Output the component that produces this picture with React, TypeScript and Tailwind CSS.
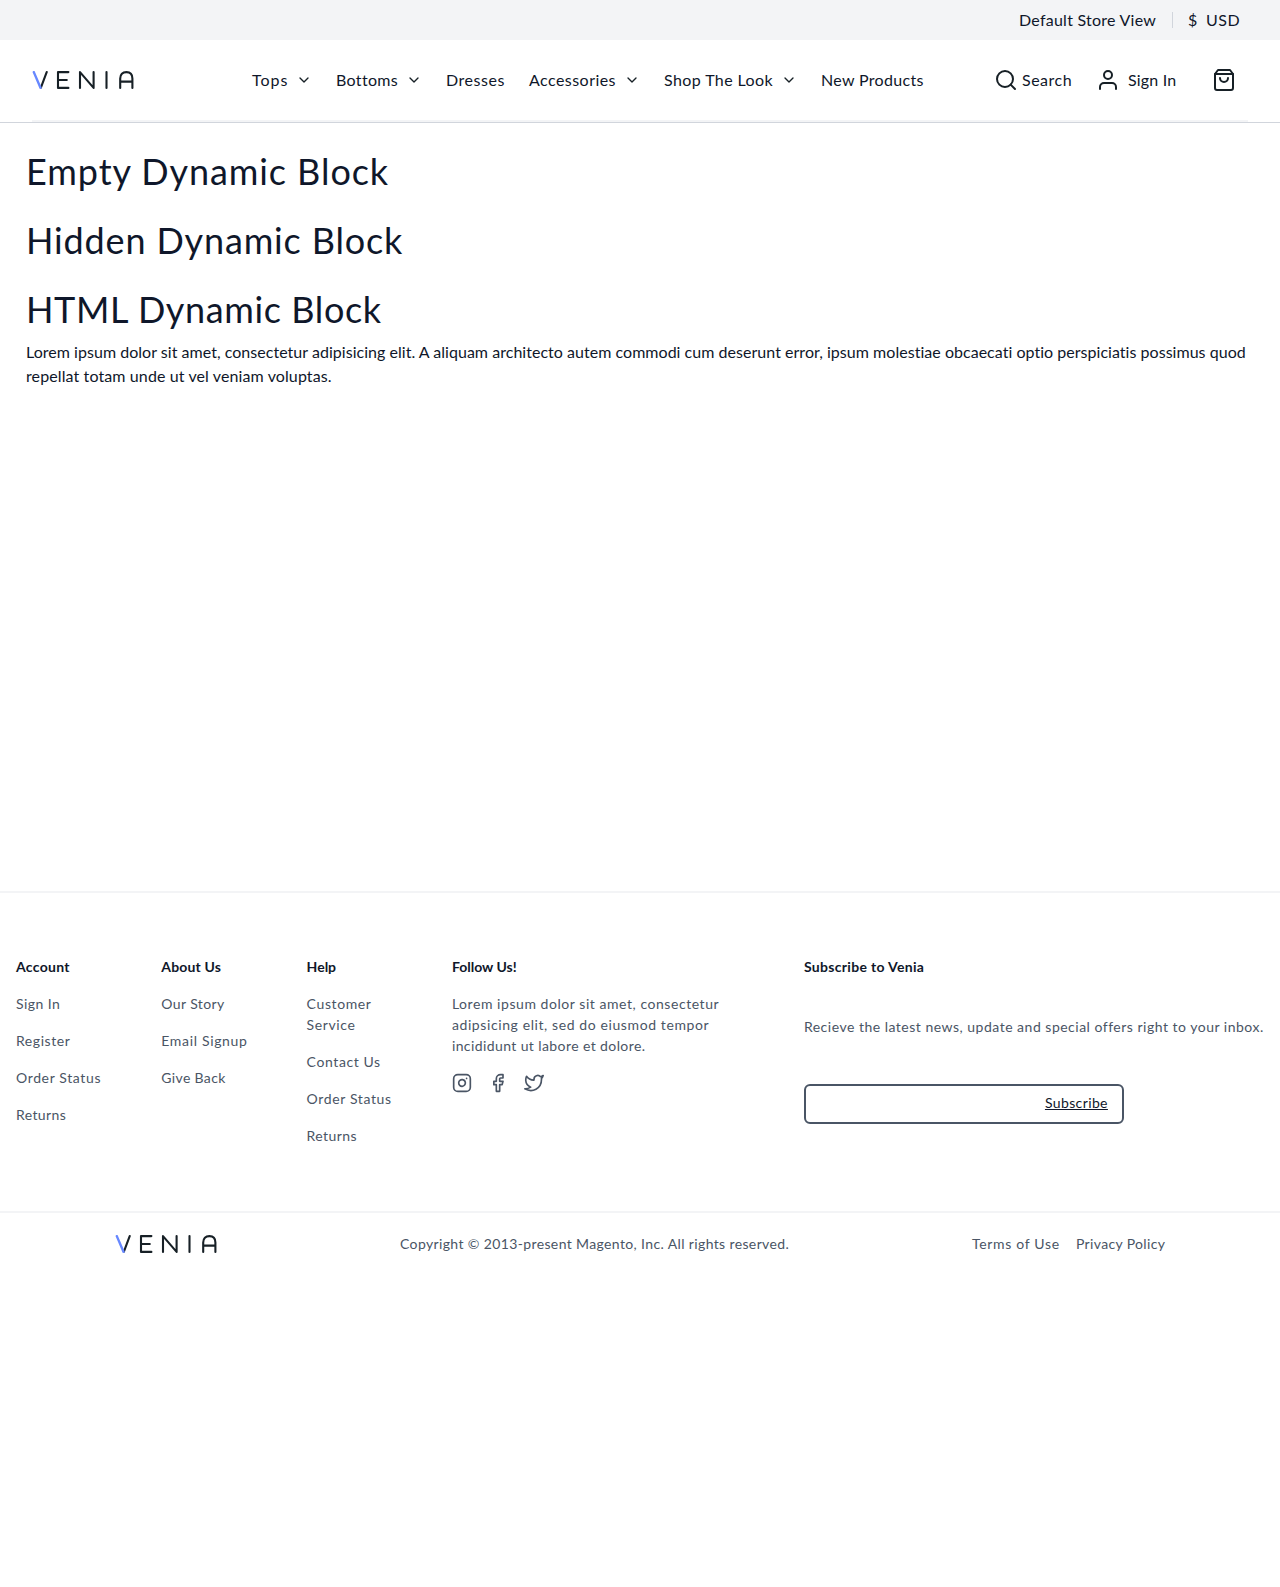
import React from "react";

type Item = { text: string; tracking: string };
type NavItem = Item & { width: string; menu?: boolean };

const nav: NavItem[] = [
  { text: "Tops", width: "w-[36px]", tracking: "tracking-[1px]", menu: true },
  { text: "Bottoms", width: "w-[62px]", tracking: "tracking-[0.33px]", menu: true },
  { text: "Dresses", width: "w-[59px]", tracking: "tracking-[0.55px]" },
  { text: "Accessories", width: "w-[87px]", tracking: "tracking-[0.45px]", menu: true },
  { text: "Shop The Look", width: "w-[109px]", tracking: "tracking-[0.4px]", menu: true },
  { text: "New Products", width: "w-[103px]", tracking: "tracking-[0.32px]" },
];

const headings: Item[] = [
  { text: "Empty Dynamic Block", tracking: "tracking-[0.93px]" },
  { text: "Hidden Dynamic Block", tracking: "tracking-[0.85px]" },
  { text: "HTML Dynamic Block", tracking: "tracking-[0.62px]" },
];

const columns: { title: Item; links: Item[] }[] = [
  {
    title: { text: "Account", tracking: "tracking-[0.3px]" },
    links: [
      { text: "Sign In", tracking: "tracking-[0.45px]" },
      { text: "Register", tracking: "tracking-[0.55px]" },
      { text: "Order Status", tracking: "tracking-[0.63px]" },
      { text: "Returns", tracking: "tracking-[0.38px]" },
    ],
  },
  {
    title: { text: "About Us", tracking: "tracking-[0.15px]" },
    links: [
      { text: "Our Story", tracking: "tracking-[0.4px]" },
      { text: "Email Signup", tracking: "tracking-[0.67px]" },
      { text: "Give Back", tracking: "tracking-[0.35px]" },
    ],
  },
  {
    title: { text: "Help", tracking: "tracking-normal" },
    links: [
      { text: "Customer Service", tracking: "tracking-[0.62px]" },
      { text: "Contact Us", tracking: "tracking-[0.6px]" },
      { text: "Order Status", tracking: "tracking-[0.63px]" },
      { text: "Returns", tracking: "tracking-[0.42px]" },
    ],
  },
];

function Icon({ size, children, className = "" }: { size: number; children: React.ReactNode; className?: string }) {
  return (
    <svg
      width={size}
      height={size}
      viewBox="0 0 24 24"
      fill="none"
      stroke="currentColor"
      strokeWidth="2"
      strokeLinecap="round"
      strokeLinejoin="round"
      className={"block shrink-0 " + className}
    >
      {children}
    </svg>
  );
}

function Logo() {
  return (
    <svg width="102" height="18" viewBox="0 0 102 18" fill="none" strokeWidth="2.1" strokeLinecap="round" strokeLinejoin="round" className="block" aria-label="Venia">
      <g stroke="#172026">
        <path d="M14.7 1.1 8.9 16.6" />
        <path d="M36.4 1.1H26v15.8h10.4M26 9h8.8" />
        <path d="M48 16.9V1.1L61.6 16.9V1.1" />
        <path d="M74.5 1.1v15.8" />
        <path d="M88.2 16.9V7.6C88.2 3.4 90.6 1.1 94.4 1.1s6 2.3 6 6.5V16.9M88.2 10.6H100.4" />
      </g>
      <path d="M1.8 1.1 8.5 16.8" stroke="#6788ff" strokeWidth="2.4" />
    </svg>
  );
}

export default function App() {
  return (
    <div className="min-h-[1587px] bg-white font-['Lato',sans-serif] text-base text-[#0f172a]">
      <div className="flex h-10 items-center justify-end bg-gray-100 pr-10 whitespace-nowrap">
        <span className="w-[137px] tracking-[0.25px]">Default Store View</span>
        <span className="ml-4 h-4 w-px bg-gray-300" />
        <span className="ml-[15px] w-[18px]">$</span>
        <span className="w-[34px] tracking-[0.5px]">USD</span>
      </div>

      <header className="border-b border-gray-300 px-8">
        <div className="flex h-[82px] items-center border-b-2 border-gray-100">
          <Logo />
          <nav className="ml-[118px] flex items-center gap-6 whitespace-nowrap">
            {nav.map((n) => (
              <div key={n.text} className="flex items-center gap-2">
                <span className={n.width + " " + n.tracking}>{n.text}</span>
                {n.menu && (
                  <Icon size={16} className="text-[#172026]">
                    <path d="m6 9 6 6 6-6" />
                  </Icon>
                )}
              </div>
            ))}
          </nav>
          <div className="ml-auto flex items-center whitespace-nowrap">
            <Icon size={24} className="text-[#172026]">
              <circle cx="11" cy="11" r="8" />
              <path d="m21 21-4.35-4.35" />
            </Icon>
            <span className="ml-1 w-[50px] tracking-[0.5px]">Search</span>
            <Icon size={24} className="ml-6 text-[#172026]">
              <path d="M20 21v-2a4 4 0 0 0-4-4H8a4 4 0 0 0-4 4v2" />
              <circle cx="12" cy="7" r="4" />
            </Icon>
            <span className="ml-2 w-[48px] tracking-[0.2px]">Sign In</span>
            <Icon size={24} className="mr-3 ml-9 text-[#172026]">
              <path d="M6 2 3 6v14a2 2 0 0 0 2 2h14a2 2 0 0 0 2-2V6l-3-4z" />
              <path d="M3 6h18M16 10a4 4 0 0 1-8 0" />
            </Icon>
          </div>
        </div>
      </header>

      <main className="h-[768px] px-[26px] pt-[21px]">
        {headings.map((h) => (
          <h2 key={h.text} className={"mb-[15px] text-[36px] leading-[54px] last-of-type:mb-0 " + h.tracking}>
            {h.text}
          </h2>
        ))}
        <p className="mt-1 leading-6 whitespace-nowrap">
          <span className="block tracking-[0.032px]">
            Lorem ipsum dolor sit amet, consectetur adipisicing elit. A aliquam architecto autem commodi cum deserunt error, ipsum molestiae obcaecati optio perspiciatis possimus quod
          </span>
          <span className="block tracking-[0.11px]">repellat totam unde ut vel veniam voluptas.</span>
        </p>
      </main>

      <footer className="text-sm leading-[21px] text-gray-600">
        <div className="flex h-[320px] border-t-2 border-gray-100 px-4 pt-[63px]">
          {columns.map((c, i) => (
            <div key={i} className="mr-10 flex w-[105.3px] shrink-0 flex-col gap-4">
              <h3 className={"font-bold text-[#0f172a] " + c.title.tracking}>{c.title.text}</h3>
              {c.links.map((l) => (
                <a key={l.text} className={l.tracking}>
                  {l.text}
                </a>
              ))}
            </div>
          ))}
          <div className="flex w-[312px] shrink-0 flex-col gap-4">
            <h3 className="font-bold text-[#0f172a]">Follow Us!</h3>
            <p className="whitespace-nowrap">
              <span className="block tracking-[0.55px]">Lorem ipsum dolor sit amet, consectetur</span>
              <span className="block tracking-[0.6px]">adipsicing elit, sed do eiusmod tempor</span>
              <span className="block tracking-[0.4px]">incididunt ut labore et dolore.</span>
            </p>
            <div className="mt-px flex gap-4">
              <Icon size={20}>
                <rect x="2" y="2" width="20" height="20" rx="5" />
                <path d="M16 11.37A4 4 0 1 1 12.63 8 4 4 0 0 1 16 11.37zM17.5 6.5h.01" />
              </Icon>
              <Icon size={20}>
                <path d="M18 2h-3a5 5 0 0 0-5 5v3H7v4h3v8h4v-8h3l1-4h-4V7a1 1 0 0 1 1-1h3z" />
              </Icon>
              <Icon size={20}>
                <path d="M23 3a10.9 10.9 0 0 1-3.14 1.53 4.48 4.48 0 0 0-7.86 3v1A10.66 10.66 0 0 1 3 4s-4 9 5 13a11.64 11.64 0 0 1-7 2c9 5 20 0 20-11.5a4.5 4.5 0 0 0-.08-.83A7.72 7.72 0 0 0 23 3z" />
              </Icon>
            </div>
          </div>
          <div className="ml-10 w-[460px] shrink-0 whitespace-nowrap">
            <h3 className="font-bold tracking-[0.32px] text-[#0f172a]">Subscribe to Venia</h3>
            <p className="mt-[39px] tracking-[0.5px]">Recieve the latest news, update and special offers right to your inbox.</p>
            <div className="mt-[47px] flex h-10 w-[320px] items-center justify-end rounded-md border-2 border-gray-600 pr-[14px]">
              <button className="pb-[3px] leading-[21px] tracking-[0.38px] text-[#0f172a] underline">Subscribe</button>
            </div>
          </div>
        </div>
        <div className="flex h-16 items-center border-t-2 border-gray-100 pl-[115px] whitespace-nowrap">
          <Logo />
          <div className="flex pb-0.5">
            <p className="ml-[183px] w-[389px] tracking-[0.37px]">Copyright © 2013-present Magento, Inc. All rights reserved.</p>
            <a className="ml-[183px] w-[88px] tracking-[0.68px]">Terms of Use</a>
            <a className="ml-4 tracking-[0.35px]">Privacy Policy</a>
          </div>
        </div>
      </footer>
    </div>
  );
}
